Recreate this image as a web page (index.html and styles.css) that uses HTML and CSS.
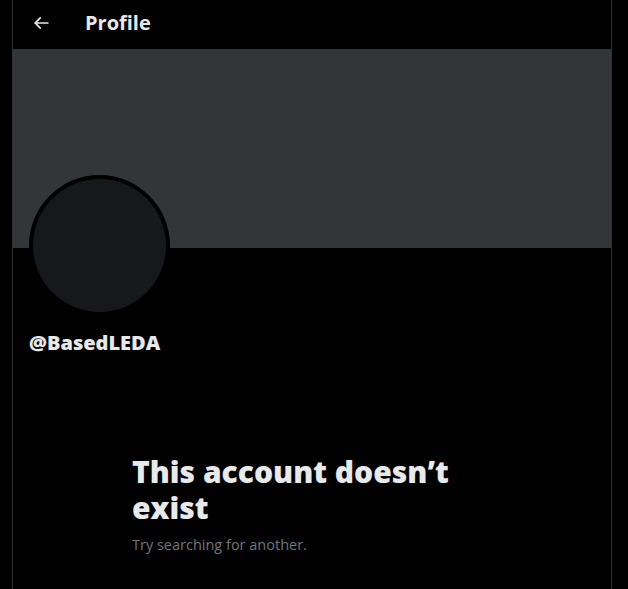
FILE: index.html
```html
<!DOCTYPE html>
<html>
<head>
<meta charset="utf-8">
<link rel="stylesheet" href="styles.css">
</head>
<body>
<main class="column">
  <header class="topbar">
    <button class="back" aria-label="Back">
      <svg viewBox="0 0 24 24" width="20" height="20"><path fill="currentColor" d="M7.414 13l5.043 5.04-1.414 1.42L3.586 12l7.457-7.46 1.414 1.42L7.414 11H21v2H7.414z"/></svg>
    </button>
    <h2 class="title">Profile</h2>
  </header>
  <div class="banner"></div>
  <div class="info">
    <div class="avatar"><div class="avatar-inner"></div></div>
    <div class="handle">@BasedLEDA</div>
  </div>
  <section class="empty">
    <h1 class="empty-title">This account doesn’t exist</h1>
    <p class="empty-sub">Try searching for another.</p>
  </section>
</main>
</body>
</html>
```
FILE: styles.css
```css
html, body {
  margin: 0;
  padding: 0;
  background: #000;
  height: 100%;
}
body {
  font-family: "Open Sans", "Liberation Sans", sans-serif;
  color: #e7e9ea;
  overflow: hidden;
}
.column {
  margin-left: 12px;
  width: 598px;
  min-height: 100%;
  border-left: 1px solid #2f3336;
  border-right: 1px solid #2f3336;
}
.topbar {
  height: 49px;
  box-sizing: border-box;
  display: flex;
  align-items: center;
  padding: 0 16px 4px;
}
.back {
  background: none;
  border: 0;
  padding: 0;
  margin-left: 2px;
  width: 20px;
  height: 20px;
  color: #e7e9ea;
  display: flex;
  align-items: center;
  justify-content: center;
}
.back svg { display: block; }
.title {
  margin: 0 0 0 34px;
  font-size: 20px;
  font-weight: 700;
  line-height: 24px;
}
.banner {
  height: 199px;
  background: #333639;
}
.info {
  padding: 0 16px;
}
.avatar {
  width: 141px;
  height: 141px;
  box-sizing: border-box;
  border-radius: 50%;
  background: #000;
  padding: 4px;
  margin-top: -73px;
}
.avatar-inner {
  width: 100%;
  height: 100%;
  border-radius: 50%;
  background: #16181c;
}
.handle {
  margin-top: 15px;
  font-size: 20px;
  font-weight: 800;
  line-height: 24px;
}
.empty {
  width: 360px;
  margin: 99px auto 0;
}
.empty-title {
  margin: 0;
  font-size: 30px;
  line-height: 36px;
  font-weight: 800;
}
.empty-sub {
  margin: 9px 0 0;
  font-size: 14.5px;
  line-height: 20px;
  color: #71767b;
}
```
